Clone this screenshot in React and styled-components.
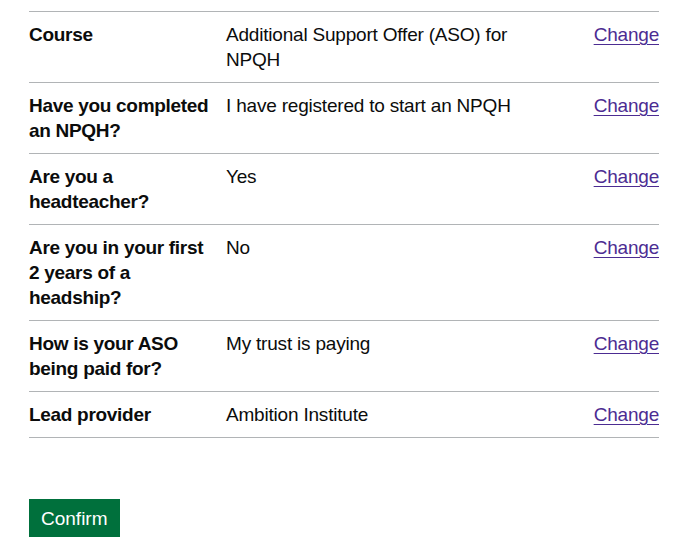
import React from "react";
import styled, { createGlobalStyle } from "styled-components";

const GlobalStyle = createGlobalStyle`
  body {
    margin: 0;
    background: #ffffff;
    font-family: "Liberation Sans", Arial, sans-serif;
    color: #0b0c0c;
  }
`;

const Page = styled.main`
  padding: 11px 27px 0 29px;
`;

const SummaryList = styled.dl`
  margin: 0 0 61px;
  border-top: 1px solid #b1b4b6;
  font-size: 19px;
  line-height: 25px;
`;

const Row = styled.div`
  display: grid;
  grid-template-columns: 197px 318px 1fr;
  border-bottom: 1px solid #b1b4b6;
`;

const Key = styled.dt`
  margin: 0;
  padding: 10px 20px 10px 0;
  font-weight: 700;
  letter-spacing: -0.3px;
`;

const KeyLine = styled.span`
  display: block;
  white-space: nowrap;
`;

const Value = styled.dd`
  margin: 0;
  padding: 10px 20px 10px 0;
  letter-spacing: -0.2px;
`;

const Actions = styled.dd`
  margin: 0;
  padding: 10px 0;
  text-align: right;
  letter-spacing: -0.2px;
`;

const ChangeLink = styled.a`
  color: #4c2c92;
  text-decoration: underline;
  text-decoration-thickness: 1px;
  text-underline-offset: 3px;
`;

const Button = styled.button`
  display: inline-block;
  margin: 0;
  padding: 8px 10px 7px;
  border: 2px solid transparent;
  border-radius: 0;
  background: #00703c;
  box-shadow: 0 2px 0 #002d18;
  color: #ffffff;
  font-family: inherit;
  font-size: 19px;
  line-height: 19px;
  cursor: pointer;
`;

const rows = [
  { key: ["Course"], value: "Additional Support Offer (ASO) for NPQH" },
  { key: ["Have you completed", "an NPQH?"], value: "I have registered to start an NPQH" },
  { key: ["Are you a", "headteacher?"], value: "Yes" },
  { key: ["Are you in your first", "2 years of a", "headship?"], value: "No" },
  { key: ["How is your ASO", "being paid for?"], value: "My trust is paying" },
  { key: ["Lead provider"], value: "Ambition Institute" },
];

export default function App() {
  return (
    <Page>
      <GlobalStyle />
      <SummaryList>
        {rows.map((row) => (
          <Row key={row.key.join(" ")}>
            <Key>
              {row.key.map((line) => (
                <KeyLine key={line}>{line}</KeyLine>
              ))}
            </Key>
            <Value>{row.value}</Value>
            <Actions>
              <ChangeLink href="#">Change</ChangeLink>
            </Actions>
          </Row>
        ))}
      </SummaryList>
      <Button type="submit">Confirm</Button>
    </Page>
  );
}
